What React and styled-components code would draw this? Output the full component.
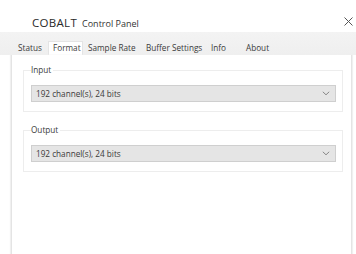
import React from "react";
import styled, { createGlobalStyle } from "styled-components";

const Global = createGlobalStyle`
  html, body { margin: 0; padding: 0; background: #ffffff; }
  body { width: 356px; height: 254px; overflow: hidden; font-family: "Open Sans", "Noto Sans", sans-serif; color: #3a3a3a; }
`;

const Window = styled.div`
  width: 356px;
  height: 254px;
  display: flex;
  flex-direction: column;
  background: #fff;
`;

const TitleBar = styled.div`
  height: 32px;
  display: flex;
  align-items: center;
  padding: 13px 0 0 32px;
  box-sizing: border-box;
`;

const Title = styled.div`
  flex: 1;
  display: flex;
  align-items: baseline;
  gap: 5px;
`;

const Brand = styled.span`
  font-size: 11.5px;
  letter-spacing: 0.3px;
  color: #2a2a2a;
`;

const Sub = styled.span`
  font-size: 9px;
  color: #333;
`;

const Close = styled.button`
  width: 16px;
  height: 16px;
  border: 0;
  padding: 0;
  margin-top: -3px;
  background: transparent;
  display: flex;
  align-items: center;
  justify-content: center;
`;

const TabStrip = styled.div`
  height: 23px;
  background: linear-gradient(#f3f3f3, #efefef);
  display: flex;
  align-items: flex-end;
  padding-left: 13px;
  box-sizing: border-box;
`;

const Tab = styled.div`
  width: ${(p) => p.$w}px;
  height: ${(p) => (p.$active ? 14 : 13)}px;
  box-sizing: border-box;
  padding-left: 4px;
  font-size: 8.2px;
  line-height: ${(p) => (p.$active ? 11 : 12)}px;
  color: #3a3a3a;
  white-space: nowrap;
  background: ${(p) => (p.$active ? "#ffffff" : "transparent")};
  border: ${(p) => (p.$active ? "1px solid #e4e4e4" : "1px solid transparent")};
  border-bottom: 0;
  margin-bottom: ${(p) => (p.$active ? 0 : 1)}px;
`;

const Panel = styled.div`
  flex: 1;
  margin: 0 4px 0 11px;
  background: #fff;
  border-left: 1px solid #e4e4e4;
  border-right: 1px solid #e4e4e4;
  box-shadow: -1px 0 1px #f0f0f0, 1px 0 1px #f0f0f0;
  padding: 10px 0 0 11px;
  display: flex;
  flex-direction: column;
  gap: 13px;
`;

const Group = styled.fieldset`
  width: 320px;
  box-sizing: border-box;
  margin: 0;
  border: 1px solid #ededed;
  padding: 10px 6px 9px 7px;
  min-width: 0;
`;

const Legend = styled.legend`
  font-size: 8.2px;
  line-height: 10px;
  padding: 0 2px 0 0;
  margin-left: 0;
  color: #3a3a3a;
`;

const Select = styled.div`
  width: 305px;
  height: 17px;
  box-sizing: border-box;
  background: #e5e5e5;
  border: 1px solid #cfcfcf;
  display: flex;
  align-items: center;
  justify-content: space-between;
  padding: 0 5px 0 4px;
  font-size: 8.2px;
  color: #3a3a3a;
`;

const Chevron = () => (
  <svg width="8" height="5" viewBox="0 0 8 5">
    <path d="M0.8 0.8 L4 3.8 L7.2 0.8" fill="none" stroke="#888" strokeWidth="1" />
  </svg>
);

const tabs = [
  { label: "Status", w: 35 },
  { label: "Format", w: 35, active: true },
  { label: "Sample Rate", w: 58 },
  { label: "Buffer Settings", w: 65 },
  { label: "Info", w: 35 },
  { label: "About", w: 32 },
];

export default function App() {
  return (
    <Window>
      <Global />
      <TitleBar>
        <Title>
          <Brand>COBALT</Brand>
          <Sub>Control Panel</Sub>
        </Title>
        <Close aria-label="Close">
          <svg width="9" height="9" viewBox="0 0 9 9">
            <path d="M0.5 0.5 L8.5 8.5 M8.5 0.5 L0.5 8.5" stroke="#555" strokeWidth="1" />
          </svg>
        </Close>
      </TitleBar>
      <TabStrip>
        {tabs.map((t) => (
          <Tab key={t.label} $w={t.w} $active={t.active}>
            {t.label}
          </Tab>
        ))}
      </TabStrip>
      <Panel>
        <Group>
          <Legend>Input</Legend>
          <Select>
            <span>192 channel(s), 24 bits</span>
            <Chevron />
          </Select>
        </Group>
        <Group>
          <Legend>Output</Legend>
          <Select>
            <span>192 channel(s), 24 bits</span>
            <Chevron />
          </Select>
        </Group>
      </Panel>
    </Window>
  );
}
